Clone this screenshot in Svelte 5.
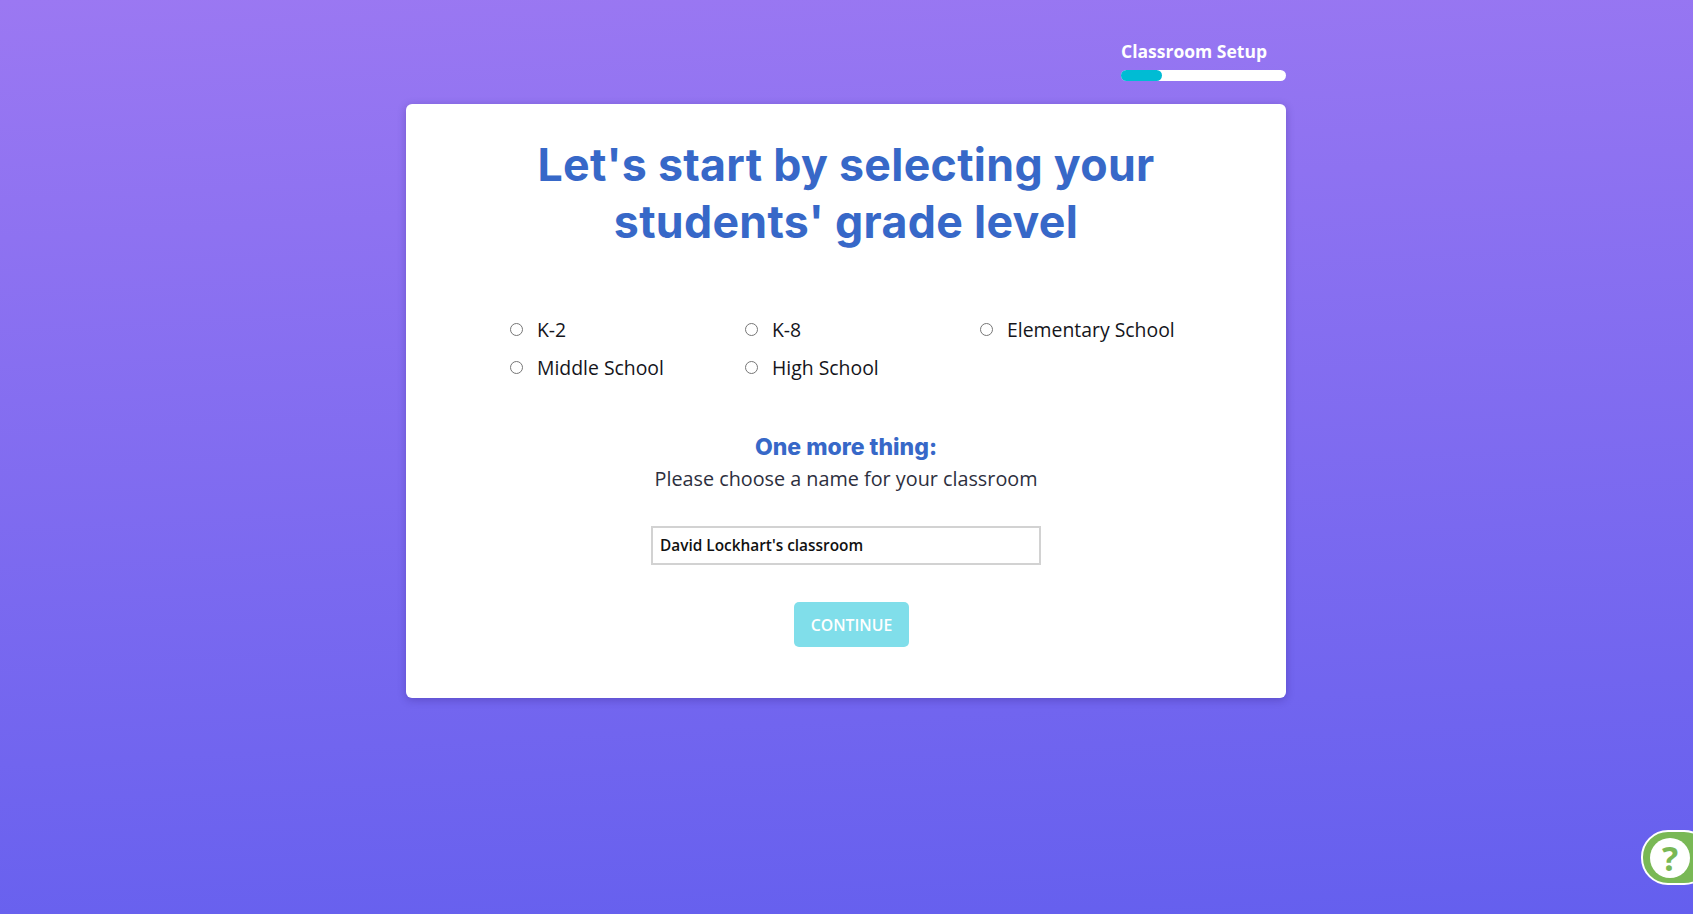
<script>
  const grades = ["K-2", "K-8", "Elementary School", "Middle School", "High School"];
  let className = $state("David Lockhart's classroom");
  let grade = $state("");
</script>

<div class="page">
  <div class="progress">
    <div class="progress-label">Classroom Setup</div>
    <div class="bar"><div class="fill" style:width="25%"></div></div>
  </div>

  <main class="card">
    <h1>Let's start by selecting your<br />students' grade level</h1>

    <div class="grades">
      {#each grades as g}
        <label class="grade">
          <input type="radio" name="grade" value={g} bind:group={grade} />
          <span>{g}</span>
        </label>
      {/each}
    </div>

    <h2>One more thing:</h2>
    <p>Please choose a name for your classroom</p>

    <input class="name" type="text" bind:value={className} />

    <button class="continue" disabled={!grade}>CONTINUE</button>
  </main>

  <button class="help" aria-label="Help">
    <span class="help-circle">?</span>
  </button>
</div>

<style>
  :global(body) {
    margin: 0;
    font-family: "Open Sans", "Noto Sans", sans-serif;
  }
  .page {
    position: relative;
    height: 914px;
    overflow: hidden;
    display: flex;
    flex-direction: column;
    align-items: center;
    background: linear-gradient(177deg, #9b78f2 0%, #645fee 100%);
  }
  .progress {
    width: 165px;
    align-self: flex-start;
    margin: 39px 0 0 1121px;
  }
  .progress-label {
    color: #fff;
    font-size: 17.5px;
    font-weight: 700;
    line-height: 24px;
    white-space: nowrap;
  }
  .bar {
    height: 11px;
    margin-top: 7px;
    border-radius: 6px;
    background: #fff;
  }
  .fill {
    height: 100%;
    border-radius: 6px;
    background: #00bcd4;
  }
  .card {
    box-sizing: border-box;
    width: 880px;
    height: 594px;
    margin: 23px 1px 0 0;
    padding-top: 33px;
    border-radius: 6px;
    background: #fff;
    box-shadow: 0 2px 8px rgba(40, 20, 110, 0.3);
    display: flex;
    flex-direction: column;
    align-items: center;
  }
  h1 {
    margin: 0;
    color: #3768c8;
    font-family: Inter, Lato, sans-serif;
    font-size: 44.7px;
    font-weight: 700;
    letter-spacing: 0.3px;
    line-height: 57px;
    text-align: center;
    white-space: nowrap;
  }
  .grades {
    align-self: flex-start;
    display: grid;
    grid-template-columns: repeat(3, 235px);
    row-gap: 8px;
    margin: 63px 0 0 104px;
  }
  .grade {
    display: flex;
    align-items: center;
    gap: 14px;
    height: 30px;
    color: #15151b;
    font-size: 19.4px;
    white-space: nowrap;
  }
  .grade input {
    appearance: none;
    box-sizing: border-box;
    width: 13px;
    height: 13px;
    margin: 0;
    border: 1px solid #767676;
    border-radius: 50%;
    background: #fff;
  }
  h2 {
    margin: 50px 0 0;
    color: #3768c8;
    font-family: Inter, Lato, sans-serif;
    font-size: 23px;
    font-weight: 800;
    line-height: 30px;
  }
  p {
    margin: 2px 0 0;
    color: #2d2f3e;
    font-size: 19.8px;
    line-height: 30px;
  }
  .name {
    box-sizing: border-box;
    width: 390px;
    height: 39px;
    margin-top: 32px;
    padding: 0 7px;
    border: 2px solid #d2d2d2;
    border-radius: 0;
    outline: none;
    color: #111;
    font-family: inherit;
    font-size: 15.4px;
    font-weight: 600;
  }
  .continue {
    width: 115px;
    height: 45px;
    margin: 37px 0 0 11px;
    padding: 0;
    border: none;
    border-radius: 5px;
    background: #80deea;
    color: #fff;
    font-family: inherit;
    font-size: 15.8px;
    font-weight: 600;
  }
  .help {
    position: absolute;
    left: 1641px;
    top: 830px;
    box-sizing: border-box;
    width: 70px;
    height: 55px;
    padding: 0 0 0 7px;
    border: 2px solid #fff;
    border-radius: 27px;
    background: #79b855;
    display: flex;
    align-items: center;
  }
  .help-circle {
    width: 40px;
    height: 40px;
    border-radius: 50%;
    background: #fff;
    color: #79b855;
    font-family: "Open Sans", sans-serif;
    font-size: 34px;
    font-weight: 700;
    line-height: 40px;
    text-align: center;
  }
</style>
